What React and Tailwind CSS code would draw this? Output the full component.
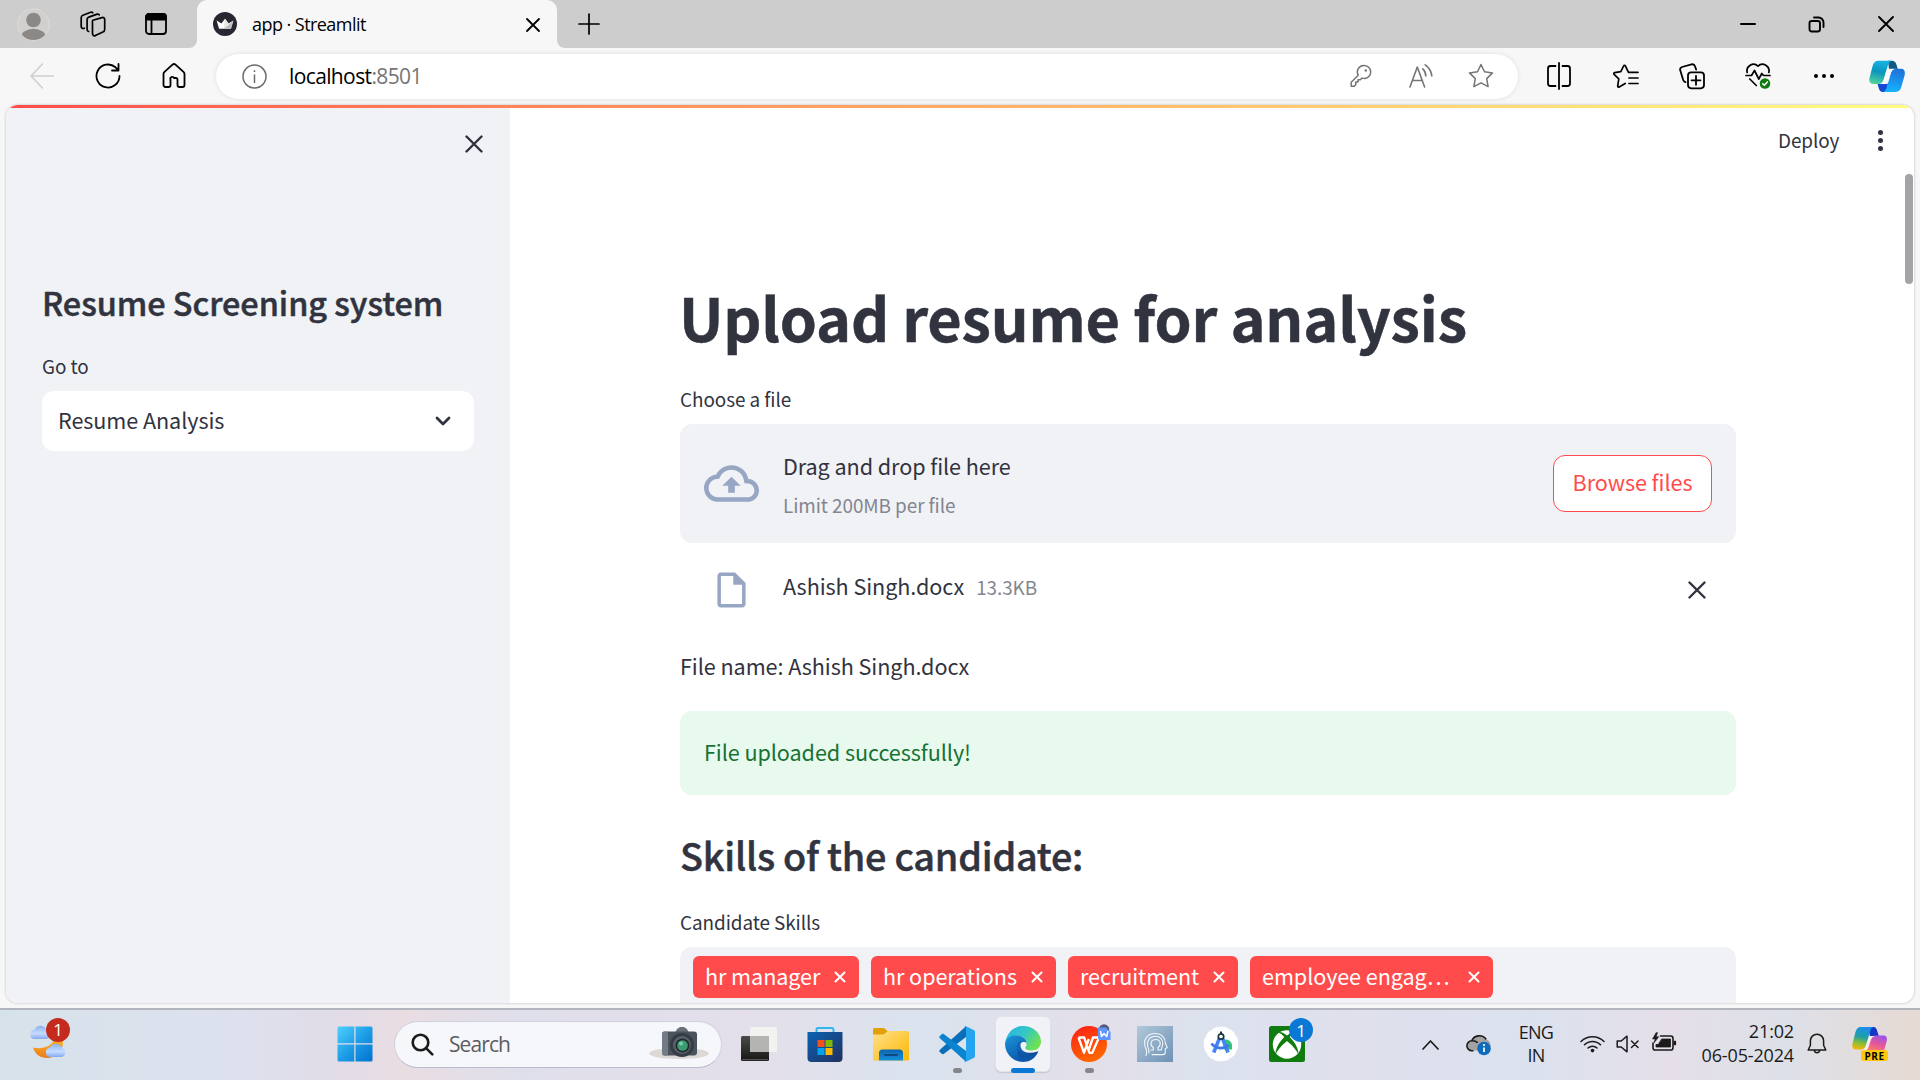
import React from 'react';

const STREAMLIT_FONT = "font-['Noto_Sans_CJK_SC','Noto_Sans',sans-serif]";
const SYSTEM_FONT = "font-['Open_Sans','Noto_Sans',sans-serif]";

function Icon({ w, h = w, box, children, className = '', sw = 1.5 }) {
  return (
    <svg
      width={w}
      height={h}
      viewBox={box || `0 0 ${w} ${h}`}
      fill="none"
      stroke="currentColor"
      strokeWidth={sw}
      strokeLinecap="round"
      strokeLinejoin="round"
      className={`block shrink-0 ${className}`}
    >
      {children}
    </svg>
  );
}

function Slot({ className, children }) {
  return <div className={`flex shrink-0 items-center justify-center ${className}`}>{children}</div>;
}

function TabBar() {
  return (
    <div className="flex h-12 bg-[#cdcdcd]">
      <div className="flex w-[189px] items-center pl-[17px] text-black">
        <svg width="33" height="33" viewBox="0 0 33 33" className="block shrink-0">
          <defs>
            <clipPath id="avatar"><circle cx="16.5" cy="16.5" r="15.5" /></clipPath>
          </defs>
          <circle cx="16.5" cy="16.5" r="15.8" fill="#d2d0ce" stroke="#dddbd9" strokeWidth="1" />
          <g clipPath="url(#avatar)" fill="#8b8885">
            <circle cx="16.5" cy="12" r="7.3" />
            <ellipse cx="16.5" cy="29.5" rx="12.5" ry="8.8" />
          </g>
        </svg>
        <Icon w={26} className="ml-[30px]" sw={1.7}>
          <path d="M12.8 8.5 22 5.8a2 2 0 0 1 2.7 1.8v10.2a2.6 2.6 0 0 1-1.8 2.4l-7.6 3.6a2 2 0 0 1-2.8-1.8V10.8a2.4 2.4 0 0 1 .3-2.3" transform="translate(0 .8)" />
          <path d="M8.6 20.5a2 2 0 0 1-1.5-2V8.5a2.6 2.6 0 0 1 1.7-2.4l8.4-3M4.200 17.200a2 2 0 0 1-3-1.700V6.600a2.600 2.600 0 0 1 1.700-2.400L10.700 1.300a1.600 1.600 0 0 1 2 .6M17.200 3.100a1.800 1.800 0 0 1 2 .8" />
        </Icon>
        <Icon w={24} className="ml-[38px]" sw={1.8}>
          <rect x="2" y="2" width="20" height="20" rx="3" />
          <path d="M2 5a3 3 0 0 1 3-3h14a3 3 0 0 1 3 3v2.500H2z" fill="currentColor" />
          <path d="M7.500 8v14" />
        </Icon>
      </div>
      <svg width="8" height="48" viewBox="0 0 8 48" className="block shrink-0"><path d="M8 40v8H0a8 8 0 0 0 8-8z" fill="#f7f7f7" /></svg>
      <div className="flex w-[360px] items-center rounded-t-[10px] bg-[#f7f7f7] pl-4">
        <svg width="24" height="24" viewBox="0 0 24 24" className="block shrink-0">
          <circle cx="12" cy="12" r="12" fill="#262730" />
          <path d="M3.600 8.600 8.400 11.500 12 6.800l3.600 4.700 4.800-2.900-2.500 8.200H6.100z" fill="#fff" />
          <path d="m20.400 8.600-2.500 8.200h-7z" fill="#bdbdc0" />
          <path d="m12 6.800 3.600 4.700-4.700 5.300z" fill="#e4e4e6" />
        </svg>
        <span className="ml-[15px] w-[274px] pb-px text-[18px] leading-6 tracking-[-0.550px] text-black">app · Streamlit</span>
        <Icon w={14} className="mt-[1px]" sw={1.8}><path d="m1 1 12 12M13 1 1 13" /></Icon>
      </div>
      <svg width="8" height="48" viewBox="0 0 8 48" className="block shrink-0"><path d="M0 40v8h8a8 8 0 0 1-8-8z" fill="#f7f7f7" /></svg>
      <div className="flex flex-1 items-center pl-[13px] pb-px">
        <Icon w={22} sw={1.7}><path d="M11 1v20M1 11h20" /></Icon>
      </div>
      <Slot className="w-[69px] pb-px"><Icon w={16} h={4} sw={2}><path d="M1 2h14" /></Icon></Slot>
      <Slot className="w-[69px]">
        <Icon w={17} sw={1.9}>
          <rect x="1.500" y="5" width="10.500" height="10.500" rx="2.200" />
          <path d="M6 1.500h4.500a5 5 0 0 1 5 5V11" />
        </Icon>
      </Slot>
      <Slot className="w-[69px] pb-px"><Icon w={16} sw={1.9}><path d="m1 1 14 14M15 1 1 15" /></Icon></Slot>
    </div>
  );
}

function CopilotLogo() {
  return (
    <svg width="36" height="33" viewBox="0 0 36 33" className="block shrink-0">
      <defs>
        <linearGradient id="cpA" x1="0.400" y1="0" x2="0.200" y2="1">
          <stop offset="0" stopColor="#15b2e0" /><stop offset=".45" stopColor="#0b95bd" /><stop offset="1" stopColor="#55d69b" />
        </linearGradient>
        <linearGradient id="cpB" x1="0.600" y1="0" x2="0.400" y2="1">
          <stop offset="0" stopColor="#2070d8" /><stop offset="1" stopColor="#14b4ff" />
        </linearGradient>
      </defs>
      <path d="M19 .7h3.500c3 0 4.200 1.300 5 4l1.200 4.200H20z" fill="#0c5a85" />
      <path d="M17 32h-3c-2.600 0-3.500-1.300-4.300-4l-1.200-4.200H19z" fill="#1549d4" />
      <path d="M9.500.7h13.200c-2.400.5-3.300 2.800-4 5.200l-3.800 13c-1 3.300-2.200 5.200-5.800 5.200H4.500C.6 24.100-.3 21 .6 17.500l3-11.500C4.500 2.700 6.200.7 9.500.7z" fill="url(#cpA)" />
      <path d="M26.500 32H14c2.300-.6 3.100-2.800 3.900-5.200l3.700-13c1-3.300 2.300-5 5.800-5H32c3.500 0 4.400 3 3.600 6.500l-3.200 11.500c-.9 3.300-2.600 5.200-5.900 5.200z" fill="url(#cpB)" />
      <path d="M21.500 8.800h5.300c-3 .3-4.300 2-5.200 5l-1.700 5.900c-.9 3-2 4.400-5 4.400H9.300c3.400-.2 4.600-2.200 5.600-5.200l1.900-6.600c.8-2.500 2-3.500 4.700-3.500z" fill="#f7f9fb" />
    </svg>
  );
}

function Toolbar() {
  return (
    <div className="flex h-[57px] items-center bg-[#f7f7f7] pb-px">
      <Icon w={24} h={26} className="ml-[30px] text-[#cfcfcf]" sw={1.6}><path d="M12.500 1 1 13l11.500 12M1 13h22.500" /></Icon>
      <Icon w={26} className="ml-[41px] text-black" sw={1.8}>
        <path d="M24.500 13A11.500 11.500 0 1 1 20.500 4.300L23.300 7M23.500 1v6.500H17" />
      </Icon>
      <Icon w={24} h={26} className="ml-[41px] text-black" sw={1.8}>
        <path d="M1.500 11.200a3 3 0 0 1 1-2.300l8-7.200a2.200 2.200 0 0 1 3 0l8 7.200a3 3 0 0 1 1 2.300V22a2 2 0 0 1-2 2h-3a2 2 0 0 1-2-2v-5.500a1.500 1.500 0 0 0-1.500-1.500h-2A1.500 1.500 0 0 0 8.500 16.500V22a2 2 0 0 1-2 2h-3a2 2 0 0 1-2-2z" />
      </Icon>
      <div className="ml-[30px] flex h-[45px] w-[1302px] shrink-0 items-center rounded-full bg-white pl-[26px] shadow-[0_0_5px_rgba(0,0,0,0.10)]">
        <Icon w={25} className="text-[#6b6b6b]" sw={1.5}>
          <circle cx="12.500" cy="12.500" r="11.500" />
          <path d="M12.500 11v7.500" />
          <circle cx="12.500" cy="7.200" r=".9" fill="currentColor" stroke="none" />
        </Icon>
        <span className="ml-[22px] w-[1061px] text-[21px] leading-7 tracking-[-0.620px] text-black">
          localhost<span className="text-[#757575]">:8501</span>
        </span>
        <Icon w={22} h={24} className="text-[#757575]" sw={1.5}>
          <path d="M14.200 1.500a6.500 6.500 0 1 1-2.200 12.600l-1.700 1.700H8v2.300H5.800v2.400l-1.400 1.700H1.200v-4l7-7A6.500 6.500 0 0 1 14.200 1.500z" />
          <circle cx="15.800" cy="6.500" r="1.200" fill="currentColor" stroke="none" />
        </Icon>
        <Icon w={25} h={26} className="ml-[37px] text-[#757575]" sw={1.600}>
          <path d="M1 24 8.300 4 15.600 24M3.600 17.500h9.500M13.800 5.800c2 1.800 3 4.300 3 7.200M16.200 1.800c3.800 2.800 6.300 6.700 6.600 11.200" />
        </Icon>
        <Icon w={26} className="ml-[34px] text-[#757575]" sw={1.500}>
          <path d="m13 1.500 3.500 7.300 8 1.100-5.800 5.700 1.400 8L13 19.800l-7.100 3.800 1.400-8L1.500 9.900l8-1.100z" />
        </Icon>
      </div>
      <Icon w={26} h={28} className="ml-[28px] text-black" sw={1.800}>
        <path d="M13 1v26M9.500 4h-5A2.500 2.500 0 0 0 2 6.500v15A2.500 2.500 0 0 0 4.500 24h5M16.500 4h5A2.500 2.500 0 0 1 24 6.500v15a2.500 2.500 0 0 1-2.500 2.500h-5" />
      </Icon>
      <Icon w={26} h={26} className="ml-[41px] text-black" sw={1.700}>
        <path d="M15.500 9.300 12.400 3a1 1 0 0 0-1.800 0L7.800 8.600l-6.200 1a1 1 0 0 0-.5 1.700l4.700 4.500L4.700 23a1 1 0 0 0 1.500 1l6-3.500M15.500 9.300H25M16 15h9M16 20.500h9" />
      </Icon>
      <Icon w={26} h={27} className="ml-[40px] text-black" sw={1.800}>
        <path d="M6.500 19.200A3.500 3.500 0 0 1 4.200 17L1.300 7.500A2.800 2.800 0 0 1 3 4l9.500-2.600a3 3 0 0 1 3.600 2l1 3.200" />
        <rect x="9" y="9.300" width="16" height="16" rx="3.200" />
        <path d="M17 12.800v9M12.500 17.300h9" />
      </Icon>
      <Icon w={26} h={28} className="ml-[40px] text-black" sw={1.700}>
        <path d="M2.200 10.500a6.500 6.500 0 0 1 10.800-6.300 6.500 6.500 0 0 1 10.800 6.300M1 13.500h5.500l3-5 4.300 8.500 3-5.500 1.700 2H25M4.800 17l6.500 6.500" />
        <circle cx="20" cy="21.500" r="5.300" fill="#0f7b10" stroke="none" />
        <path d="m17.700 21.700 1.600 1.500 3-3.300" stroke="#fff" strokeWidth="1.500" />
      </Icon>
      <div className="ml-[43px] flex gap-[4px]">
        <span className="size-1 rounded-full bg-black" /><span className="size-1 rounded-full bg-black" /><span className="size-1 rounded-full bg-black" />
      </div>
      <div className="ml-[35px] pt-px"><CopilotLogo /></div>
    </div>
  );
}

function Sidebar() {
  return (
    <aside className="flex w-[504px] shrink-0 flex-col bg-[#f0f2f6] px-9 text-[#31333f]">
      <div className="mt-[27px] flex h-[18px] justify-end">
        <Icon w={18} className="-mr-[9px]" sw={2.400}><path d="m1.500 1.500 15 15M16.500 1.500l-15 15" /></Icon>
      </div>
      <h1 className="mt-[126px] text-[32.400px] font-medium leading-[46px] tracking-[-0.030px] [-webkit-text-stroke:0.500px_#31333f]">Resume Screening system</h1>
      <label className="mt-[27px] text-[18.900px] leading-7 tracking-[-0.080px]">Go to</label>
      <div className="mt-[11px] flex h-[60px] w-[432px] items-center justify-between rounded-xl bg-white pl-4 pr-[23px]">
        <span className="pb-[3px] text-[21.600px] leading-8 tracking-[-0.070px]">Resume Analysis</span>
        <Icon w={16} h={10} sw={2.800}><path d="m2 2 6 6 6-6" /></Icon>
      </div>
    </aside>
  );
}

const SKILLS = [
  { label: 'hr manager', width: 'w-[166px]' },
  { label: 'hr operations', width: 'w-[185px]' },
  { label: 'recruitment', width: 'w-[170px]' },
  { label: 'employee engag…', width: 'w-[243px]' },
];

function Main() {
  return (
    <main className="flex flex-1 justify-end overflow-hidden text-[#31333f]">
      <div className="flex h-[894px] w-[1056px] shrink-0 flex-col tracking-[-0.070px]">
        <h1 className="-ml-px mt-[168px] whitespace-nowrap text-[59.400px] font-bold leading-[80px] tracking-[-0.180px] [-webkit-text-stroke:0.500px_#31333f]">Upload resume for analysis</h1>
        <label className="mt-[29px] text-[18.900px] leading-7">Choose a file</label>
        <div className="mt-[11px] flex h-[119px] shrink-0 items-center rounded-xl bg-[#f0f2f6] px-6">
          <svg width="55" height="55" viewBox="0 0 24 24" fill="#97a6c3" className="block shrink-0">
            <path d="M19.350 10.040A7.490 7.490 0 0 0 12 4C9.110 4 6.600 5.640 5.350 8.040A5.994 5.994 0 0 0 0 14c0 3.310 2.690 6 6 6h13c2.760 0 5-2.240 5-5 0-2.640-2.050-4.780-4.650-4.960zM19 18H6c-2.210 0-4-1.790-4-4 0-2.050 1.530-3.760 3.560-3.970l1.070-.110.500-.950A5.469 5.469 0 0 1 12 6c2.620 0 4.880 1.860 5.390 4.430l.300 1.500 1.530.110A2.980 2.980 0 0 1 22 15c0 1.650-1.350 3-3 3zM8 13h2.550v3h2.900v-3H16l-4-4z" />
          </svg>
          <div className="ml-6 flex-1 pt-[3px]">
            <div className="text-[21.600px] leading-[38px]">Drag and drop file here</div>
            <div className="pt-[2px] text-[18.900px] leading-[36px] text-[#84868f]">Limit 200MB per file</div>
          </div>
          <button className="flex h-[57px] w-[159px] items-center justify-center rounded-xl border border-[#ff4b4b] bg-white pb-[3px] text-[21.600px] leading-8 text-[#ff4b4b]">Browse files</button>
        </div>
        <div className="mt-6 flex h-[46px] shrink-0 items-center pl-[33px] pr-[30px]">
          <svg width="37" height="44" viewBox="1.500 0 21 24" preserveAspectRatio="xMidYMid meet" fill="#97a6c3" className="block shrink-0">
            <path d="M6 2c-1.100 0-1.990.9-1.990 2L4 20c0 1.100.890 2 1.990 2H18c1.100 0 2-.9 2-2V8l-6-6H6zm0 18V4h7v5h5v11H6z" />
          </svg>
          <span className="ml-[33px] pb-[9px] text-[21.600px] leading-8">Ashish Singh.docx</span>
          <span className="ml-3 flex-1 pb-[7px] text-[18.900px] leading-7 text-[#84868f]">13.3KB</span>
          <Icon w={18} sw={2.400}><path d="m1.500 1.500 15 15M16.500 1.500l-15 15" /></Icon>
        </div>
        <p className="mt-[35px] text-[21.600px] leading-9">File name: Ashish Singh.docx</p>
        <div className="mt-[27px] flex h-[84px] shrink-0 items-center rounded-xl bg-[#e8f9ee] px-6 pb-[3px] text-[21.600px] leading-8 text-[#177233]">File uploaded successfully!</div>
        <h3 className="mt-[35px] text-[37.800px] font-medium leading-[50px] tracking-[-0.240px] [-webkit-text-stroke:0.500px_#31333f]">Skills of the candidate:</h3>
        <label className="mt-7 text-[18.900px] leading-7">Candidate Skills</label>
        <div className="mt-[11px] flex h-[80px] shrink-0 items-start gap-3 rounded-t-xl bg-[#f0f2f6] pl-[13px] pt-[9px]">
          {SKILLS.map((s) => (
            <span key={s.label} className={`flex h-[42px] items-center justify-between rounded-md bg-[#ff4b4b] pl-3 pr-[13px] text-white ${s.width}`}>
              <span className="pb-[3px] text-[21.600px] leading-8">{s.label}</span>
              <Icon w={12} sw={2}><path d="m1.500 1.500 9 9M10.500 1.500l-9 9" /></Icon>
            </span>
          ))}
        </div>
      </div>
      <div className="flex w-[178px] shrink-0 flex-col">
        <div className="ml-[42px] mt-[18px] flex items-center">
          <span className="pb-[2px] text-[18.900px] leading-7 tracking-[-0.070px]">Deploy</span>
          <div className="mb-px ml-[39px] flex flex-col gap-[3px]">
            <span className="size-[5px] rounded-full bg-[#31333f]" /><span className="size-[5px] rounded-full bg-[#31333f]" /><span className="size-[5px] rounded-full bg-[#31333f]" />
          </div>
        </div>
        <div className="mr-px mt-[18px] h-[110px] w-[8px] self-end rounded-full bg-[#a3a4a8]" />
      </div>
    </main>
  );
}

function Badge({ children, className }) {
  return <span className={`absolute flex size-6 items-center justify-center rounded-full text-[17px] leading-none text-white ${className}`}>{children}</span>;
}

function Weather() {
  const cloud = 'M5 15a4.800 4.800 0 0 1 .4-9.400A6.500 6.500 0 0 1 17.500 6 4.700 4.700 0 0 1 17.500 15z';
  return (
    <div className="relative ml-[29px] mt-[3px] h-12 w-[44px] shrink-0">
      <svg width="44" height="48" viewBox="0 0 44 48" className="block">
        <defs>
          <linearGradient id="cl" x1="0" y1="0" x2="0" y2="1"><stop offset="0" stopColor="#8cb2f2" /><stop offset=".6" stopColor="#c5dcff" /><stop offset="1" stopColor="#86a8ee" /></linearGradient>
          <linearGradient id="moon" x1="0" y1="0" x2="0" y2="1"><stop offset="0" stopColor="#fcb51f" /><stop offset="1" stopColor="#ec7c1e" /></linearGradient>
        </defs>
        <path d={cloud} transform="translate(0 2)" fill="url(#cl)" />
        <path d="M33 16c3.500 10-4 20-15 20C11 36 6 32 4 25.500c9 2.500 19-1 22-9.500z" fill="url(#moon)" />
        <path d={cloud} transform="translate(15.500 20)" fill="url(#cl)" />
      </svg>
      <Badge className="-top-[4px] left-[17px] bg-[#c42b1c]">1</Badge>
    </div>
  );
}

function SearchBox() {
  return (
    <div className="ml-[21px] flex h-[47px] w-[328px] shrink-0 items-center rounded-full border border-b-[#b9bccb] border-[#cfd1de] bg-[#f6f7fb] pl-4">
      <Icon w={23} className="text-[#1b1b1b]" sw={2.600}><circle cx="9.500" cy="9.500" r="7.800" /><path d="m15.300 15.300 6 6" /></Icon>
      <span className="ml-[15px] w-[61px] text-[21px] leading-7 tracking-[-0.900px] text-[#5c5c60]">Search</span>
      <svg width="62" height="36" viewBox="0 0 62 36" className="ml-[138px] block shrink-0">
        <ellipse cx="31" cy="27.500" rx="30" ry="5.500" fill="#dcd8d4" />
        <path d="M27 7l2-4 3-2h4l3 2 2 4z" fill="#6a7077" />
        <rect x="14" y="5.500" width="35" height="24" rx="3" fill="#4a525c" />
        <rect x="14" y="5.500" width="6" height="24" rx="2" fill="#727b86" />
        <circle cx="34" cy="19" r="12" fill="#353c45" />
        <circle cx="34" cy="19" r="9" fill="#5b626b" />
        <circle cx="34.500" cy="19.500" r="7" fill="#1f2b2b" />
        <circle cx="34.500" cy="19.500" r="5.300" fill="#3d9b72" />
        <circle cx="33" cy="17.500" r="2" fill="#76cfa6" />
      </svg>
    </div>
  );
}

function WindowsLogo() {
  return (
    <svg width="36" height="36" viewBox="0 0 36 36" className="ml-[264px] block shrink-0">
      <defs><linearGradient id="win" gradientUnits="userSpaceOnUse" x1="0" y1="0" x2="36" y2="36"><stop offset="0" stopColor="#4fd2ff" /><stop offset=".5" stopColor="#1e9ee6" /><stop offset="1" stopColor="#0070d0" /></linearGradient></defs>
      <path fill="url(#win)" d="M2 .5h15.300v16.800H.5V2A1.500 1.500 0 0 1 2 .5zM18.500.5H34A1.500 1.500 0 0 1 35.500 2v15.300h-17zM.5 18.500h16.800v17H2A1.500 1.500 0 0 1 .5 34zM18.500 18.500h17V34a1.500 1.500 0 0 1-1.500 1.500H18.500z" />
    </svg>
  );
}

const TaskViewIcon = () => (
  <svg width="36" height="36" viewBox="0 0 36 36">
    <defs><linearGradient id="tv" x1="0" y1="0" x2="0" y2="1"><stop offset="0" stopColor="#4a4a48" /><stop offset="1" stopColor="#171717" /></linearGradient></defs>
    <rect x="0" y="10" width="28" height="25" rx="1.500" fill="url(#tv)" />
    <path d="M1 33.700h26" stroke="#777" strokeWidth=".8" />
    <rect x="9" y="1" width="27" height="25" rx="1.500" fill="#f2f2f1" />
    <path d="M9 10h19v16H10.500A1.500 1.500 0 0 1 9 24.500z" fill="#b4b4b2" />
  </svg>
);

const StoreIcon = () => (
  <svg width="36" height="36" viewBox="0 0 36 36">
    <defs><linearGradient id="st" x1="0" y1="0" x2="1" y2="1"><stop offset="0" stopColor="#0a63b4" /><stop offset="1" stopColor="#232f5e" /></linearGradient></defs>
    <path d="M9.500 8V3.500A1.500 1.500 0 0 1 11 2h14a1.500 1.500 0 0 1 1.500 1.500V8" fill="none" stroke="#2fb6ee" strokeWidth="2" />
    <path d="M.5 6h35v26a4 4 0 0 1-4 4h-27a4 4 0 0 1-4-4z" fill="url(#st)" />
    <rect x="10.500" y="14" width="7" height="7" fill="#f25022" /><rect x="18.500" y="14" width="7" height="7" fill="#7fba00" />
    <rect x="10.500" y="22" width="7" height="7" fill="#00a4ef" /><rect x="18.500" y="22" width="7" height="7" fill="#ffb900" />
  </svg>
);

const ExplorerIcon = () => (
  <svg width="36" height="36" viewBox="0 0 36 36">
    <defs>
      <linearGradient id="ex" x1="0" y1="0" x2="1" y2="1"><stop offset="0" stopColor="#ffe08a" /><stop offset="1" stopColor="#fbb804" /></linearGradient>
      <linearGradient id="ex2" x1="0" y1="0" x2="0" y2="1"><stop offset="0" stopColor="#0e64ad" /><stop offset="1" stopColor="#1590dc" /></linearGradient>
    </defs>
    <path d="M0 3.500A1.500 1.500 0 0 1 1.500 2H11l4 3.500L11 9H0z" fill="#e0a008" />
    <path d="M0 8.500h10.500L15 5h19.500A1.500 1.500 0 0 1 36 6.500v27a1 1 0 0 1-1 1H1a1 1 0 0 1-1-1z" fill="url(#ex)" />
    <path d="M6 34.500V27a3.500 3.500 0 0 1 3.500-3.500h17A3.500 3.500 0 0 1 30 27v7.500z" fill="url(#ex2)" />
    <rect x="11" y="28" width="14" height="2" rx="1" fill="#0b4a85" />
  </svg>
);

const VSCodeIcon = () => (
  <svg width="36" height="36" viewBox="0 0 36 36">
    <path d="M27 .3.900 23.800c-.8.700-.8 1.600-.1 2.200l2 1.800c.5.500 1.300.5 1.900.1L27 11z" fill="#0a6fb8" />
    <path d="M27 35.700.900 12.200c-.8-.7-.8-1.600-.1-2.200l2-1.800c.5-.5 1.300-.5 1.900-.1L27 25z" fill="#0a84cf" />
    <path d="M27 .2 34.700 4c.8.400 1.300 1 1.300 1.900v24.200c0 .9-.5 1.500-1.300 1.900L27 35.800c-.9.400-1.700.1-2.200-.4.800.5 2.200.1 2.200-1V1.600c0-1.100-1.400-1.500-2.200-1C25.300.1 26.100-.2 27 .2z" fill="#25a4f0" />
  </svg>
);

const EdgeIcon = () => (
  <svg width="36" height="36" viewBox="0 0 36 36">
    <defs>
      <linearGradient id="e1" x1="0" y1="0" x2="1" y2=".6"><stop offset="0" stopColor="#2bb3e8" /><stop offset=".5" stopColor="#31c6c9" /><stop offset="1" stopColor="#6fe24f" /></linearGradient>
      <linearGradient id="e2" x1="0" y1="0" x2=".4" y2="1"><stop offset="0" stopColor="#1b95d8" /><stop offset="1" stopColor="#0b5ab0" /></linearGradient>
      <linearGradient id="e3" x1="0" y1="0" x2="1" y2="0"><stop offset="0" stopColor="#0f6bc0" /><stop offset="1" stopColor="#123f85" /></linearGradient>
    </defs>
    <path d="M.5 15.500C2 6.500 9 0 18 0c10.500 0 18 7.500 18 15.500 0 5.700-4.300 9-9.500 9-4 0-6.300-1.300-6.300-2.700 0-1 1.400-1.600 1.400-4.400 0-4.300-4.400-7.900-9.600-7.900C7 9.500 3 11.500.5 15.500z" fill="url(#e1)" />
    <path d="M0 18C.2 12.500 5.500 9.300 11.500 9.300c5.500 0 10.100 3.700 10.100 8.100-2.300-2.700-7.600-1.400-8.200 5.200-.5 6.500 4.200 12.100 8.600 12.900A18 18 0 0 1 0 18z" fill="url(#e2)" />
    <path d="M16 14.500c-4.500 2.500-5.800 8-3.500 13 3.200 6.500 14 6.500 20.500-1.300.6-.6.200-1-.5-.7C25 28.500 16 26.500 15.500 20c-.1-2 .2-4 .5-5.500z" fill="url(#e3)" />
    <path d="M22 35.500c4-.7 8.300-3.500 11-9.300-6.300 5-16 3.500-20.500-3.700C11.500 28.700 15 35 22 35.500z" fill="#0f55a5" />
  </svg>
);

const WpsIcon = () => (
  <svg width="36" height="36" viewBox="0 0 36 36" className="overflow-visible">
    <defs><linearGradient id="wp" x1="0" y1="0" x2=".4" y2="1"><stop offset="0" stopColor="#fd1d1a" /><stop offset="1" stopColor="#ff6500" /></linearGradient></defs>
    <circle cx="18" cy="18" r="18" fill="url(#wp)" />
    <path d="M7.500 11.500h5.700l4.300 13 4.500-13h5.500M7.500 11.500l5.500 15.300 4.800-13.800M17.500 24.500l1 2.300h2.800L28 11.500" fill="none" stroke="#fff" strokeWidth="2.300" strokeLinejoin="round" />
    <circle cx="33" cy="3.500" r="5.300" fill="#565a78" />
    <path d="M27 1.500h8l4.500 4.500v8H29.500a2.500 2.500 0 0 1-2.500-2.500z" fill="#5f94fa" />
    <path d="m29.500 5 1 5.500 2.500-3 2.700 3 1.300-5.500" fill="none" stroke="#fff" strokeWidth="1.500" strokeLinejoin="round" />
  </svg>
);

const FaceIcon = () => (
  <svg width="36" height="36" viewBox="0 0 36 36">
    <defs><linearGradient id="fc" x1="0" y1="0" x2="1" y2="1"><stop offset="0" stopColor="#b2c8da" /><stop offset="1" stopColor="#6d91b5" /></linearGradient></defs>
    <path d="M0 0h36v36H0z" fill="url(#fc)" />
    <g fill="none" stroke="#f0f5fa" strokeWidth="1.100" strokeLinecap="round" strokeLinejoin="round">
      <path d="M9 29.500c1.300-3 .8-5-.6-8C5.500 14 10.500 7.500 18 7.500c7 0 10.300 4.500 10.300 9.500l2 4.800-2 .8v4c0 1.500-1 2-2.500 2H15" />
      <path d="M12 27c.3-2.500-.3-4-1.200-6.500-1.500-5.500 2-10.300 7.500-10.300 5 0 7.500 3.500 7.500 7.300 0 3-1.500 4-1.500 6.500H21v-2.500c3-2 3.500-8-2.200-8s-6 6-2.500 8V24h-2.500" />
    </g>
  </svg>
);

const AndroidStudioIcon = () => (
  <svg width="36" height="36" viewBox="0 0 36 36">
    <circle cx="18" cy="18" r="16" fill="#fff" />
    <circle cx="18" cy="18" r="16.300" fill="none" stroke="#fff" strokeWidth="2.200" strokeDasharray="6 2.530" strokeLinecap="round" />
    <path d="M20 14.500a6 6 0 0 1 9 5.500v3.500h-8z" fill="#35c37a" />
    <path d="m17 11-6.300 15.500M19 11l6 15.500" stroke="#4285f4" strokeWidth="3.600" />
    <path d="M8.500 17.500c4 5.500 12 6 17.500 1.500" fill="none" stroke="#3c78ea" strokeWidth="2.800" />
    <circle cx="18" cy="10.500" r="2.700" fill="#fff" stroke="#17313f" strokeWidth="1.700" />
    <path d="M18 5.500v2.500" stroke="#17313f" strokeWidth="2" />
  </svg>
);

const XboxIcon = () => (
  <svg width="36" height="36" viewBox="0 0 36 36">
    <rect width="36" height="36" rx="2.500" fill="#107c10" />
    <circle cx="18" cy="18.500" r="14.200" fill="#fff" />
    <path d="M8 6.500c3.500-1.500 7 .5 10 3 3-2.500 6.500-4.500 10-3-2.500-.5-5.500 2-7.300 4.500 5 5 8.800 11 8.800 17.500C27.500 24 22.500 18.500 18 15c-4.500 3.500-9.500 9-11.500 13.500C6.500 22 10.300 16 15.300 11 13.500 8.500 10.500 6 8 6.500z" fill="#107c10" />
  </svg>
);

const APPS = [
  { id: 'taskview', icon: TaskViewIcon },
  { id: 'store', icon: StoreIcon },
  { id: 'explorer', icon: ExplorerIcon },
  { id: 'vscode', icon: VSCodeIcon, open: true },
  { id: 'edge', icon: EdgeIcon, active: true },
  { id: 'wps', icon: WpsIcon, open: true },
  { id: 'face', icon: FaceIcon },
  { id: 'studio', icon: AndroidStudioIcon },
  { id: 'xbox', icon: XboxIcon, badge: '1' },
];

function CopilotPre() {
  return (
    <div className="relative ml-[25px] h-[36px] w-[36px] shrink-0">
      <svg width="36" height="26" viewBox="0 0 36 26" className="block">
        <defs>
          <linearGradient id="p1" x1=".6" y1="0" x2=".4" y2="1"><stop offset="0" stopColor="#1b8df0" /><stop offset=".45" stopColor="#1fa0a8" /><stop offset=".75" stopColor="#8fbf30" /><stop offset="1" stopColor="#f2b50a" /></linearGradient>
          <linearGradient id="p2" x1=".7" y1="0" x2=".3" y2="1"><stop offset="0" stopColor="#9a54e8" /><stop offset=".5" stopColor="#e0559f" /><stop offset="1" stopColor="#ff7d6a" /></linearGradient>
        </defs>
        <path d="M16 1h5c3 0 3.800 2 4.500 5l1.500 4.500h-9z" fill="#1638c8" />
        <path d="M9 1h12.500c-2.500.8-3 3-3.600 5L14 19c-1 3-2.500 4.500-5.500 4.500H4C.5 23.500-.300 21 .5 17.500L3.500 6C4.500 2.700 6 1 9 1z" fill="url(#p1)" />
        <path d="M14 25c1.500-1.500 2-3 2.500-5l2-6c1-3.200 2.500-4.500 5.500-4.500h7.500c3 0 4 2.500 3.200 5.500L32 25z" fill="url(#p2)" />
        <path d="M18 10h5.500c-3 .5-4 2-5 5l-2 6c-.8 2-1.500 3-3.500 3.500H8.500c3-.5 4.500-2 5.500-5l2-6c.5-2 1-3 2-3.500z" fill="#f6eef0" />
      </svg>
      <span className="absolute right-0 bottom-[1px] flex h-[11px] w-[27px] items-center justify-center rounded-[3px] bg-[#ffc80a] text-[10px] font-bold leading-none tracking-[0.500px] text-black">PRE</span>
    </div>
  );
}

function Taskbar() {
  return (
    <div className="flex h-[72px] items-center border-t-2 border-[#b2b4be] bg-linear-[90deg,#d6e2ea_0%,#dde1ee_12%,#e0dce8_17%,#e9dde2_21%,#dfdfeb_27%,#e4dfea_39%,#dae3ee_48%,#e3dfe9_57%,#dbe2ee_63%,#dfe0ec_70%,#dbe2ee_80%,#e5dfe9_87%,#dde0e8_93%,#e6dad4_100%] pb-[2px] text-[#1b1b1b]">
      <Weather />
      <WindowsLogo />
      <SearchBox />
      <div className="ml-[4px] flex h-full">
        {APPS.map(({ id, icon: AppIcon, open, active, badge }) => (
          <div key={id} className="relative flex w-[66px] items-center justify-center">
            <div className={`flex size-14 items-center justify-center rounded-md ${active ? 'border border-[#dfe3ec] bg-[#f0f2f8] shadow-[0_1px_1px_rgba(0,0,0,0.12)]' : ''}`}>
              <AppIcon />
            </div>
            {open && <span className="absolute bottom-[5px] h-[5px] w-[9px] rounded-full bg-[#85868c]" />}
            {active && <span className="absolute bottom-[5px] h-[5px] w-6 rounded-full bg-[#0a78d4]" />}
            {badge && <Badge className="right-[7px] top-[8px] bg-[#0a78d4]">{badge}</Badge>}
          </div>
        ))}
      </div>
      <Icon w={17} h={11} className="ml-[102px]" sw={1.700}><path d="m1 10 7.500-8L16 10" /></Icon>
      <svg width="26" height="23" viewBox="0 0 26 23" className="ml-[27px] block shrink-0">
        <path d="M6 17.500a5 5 0 0 1-.8-9.900A8.300 8.300 0 0 1 20 6.500a5.800 5.800 0 0 1 1 11z" fill="#a3a3a6" />
        <path d="M7.500 17.700H6a4.900 4.900 0 0 1-.3-9.900 8.300 8.300 0 0 1 14.500-1.300M5.700 7.800c2-.3 4 .2 6 1.800" fill="none" stroke="#1b1b1b" strokeWidth="1.600" />
        <circle cx="18" cy="15.500" r="6.800" fill="#0f6cbd" />
        <path d="M18 14.500v4.500" stroke="#fff" strokeWidth="1.700" /><circle cx="18" cy="12" r="1.100" fill="#fff" />
      </svg>
      <div className="ml-[26px] w-[36px] text-center text-[18px] leading-[23px] tracking-[-0.700px]">ENG<br />IN</div>
      <Icon w={25} h={18} className="ml-[26px]" sw={1.500}>
        <path d="M1 6.500a16.300 16.300 0 0 1 23 0M4.500 9.800a11.300 11.300 0 0 1 16 0M8 13a6.500 6.500 0 0 1 9 0" />
        <circle cx="12.500" cy="15.600" r="1.800" fill="currentColor" stroke="none" />
      </Icon>
      <Icon w={24} h={18} className="ml-[11px]" sw={1.500}>
        <path d="M1.200 6h4L11 1.200v15.600L5.200 12h-4zM15.500 6l6.500 6.500M22 6l-6.500 6.500" />
      </Icon>
      <Icon w={26} h={21} className="ml-[11px] mb-[3px]" sw={1.600}>
        <path d="M9.500 4h10.200A2.300 2.300 0 0 1 22 6.300v9.400a2.300 2.300 0 0 1-2.300 2.300H4.300A2.300 2.300 0 0 1 2 15.700V11" />
        <path d="M11 7h8.500v8H5v-2.500h2z" fill="currentColor" strokeWidth=".8" />
        <path d="M23.300 9.500h1v3h-1z" fill="currentColor" />
        <path d="M5 .8 1.500 7h2.600L3 11l4.800-6.300H5.300L6.500.8z" fill="currentColor" strokeWidth=".5" />
      </Icon>
      <div className="mb-[2px] ml-[17px] w-[100px] text-right text-[18px] leading-6 tracking-[-0.150px]">21:02<br />06-05-2024</div>
      <Icon w={20} h={22} className="ml-[13px]" sw={1.500}>
        <path d="M10 1.200a6.600 6.600 0 0 0-6.600 6.600v4.500L1.200 17h17.600l-2.200-4.700V7.800A6.600 6.600 0 0 0 10 1.200zM7.200 17.500a2.900 2.900 0 0 0 5.600 0" />
      </Icon>
      <CopilotPre />
    </div>
  );
}

export default function App() {
  return (
    <div className={`flex h-[1080px] w-[1920px] flex-col overflow-hidden bg-[#f7f7f7] ${SYSTEM_FONT}`}>
      <TabBar />
      <Toolbar />
      <div className="h-[903px] px-[6px] pb-[5px]">
        <div className={`flex h-[898px] flex-col overflow-hidden rounded-[12px] bg-white shadow-[0_0_2px_1px_rgba(0,0,0,0.12)] ${STREAMLIT_FONT}`}>
          <div className="h-[3px] shrink-0 bg-linear-to-r from-[#ff4b4b] to-[#fffd80]" />
          <div className="flex flex-1 overflow-hidden">
            <Sidebar />
            <Main />
          </div>
        </div>
      </div>
      <Taskbar />
    </div>
  );
}
